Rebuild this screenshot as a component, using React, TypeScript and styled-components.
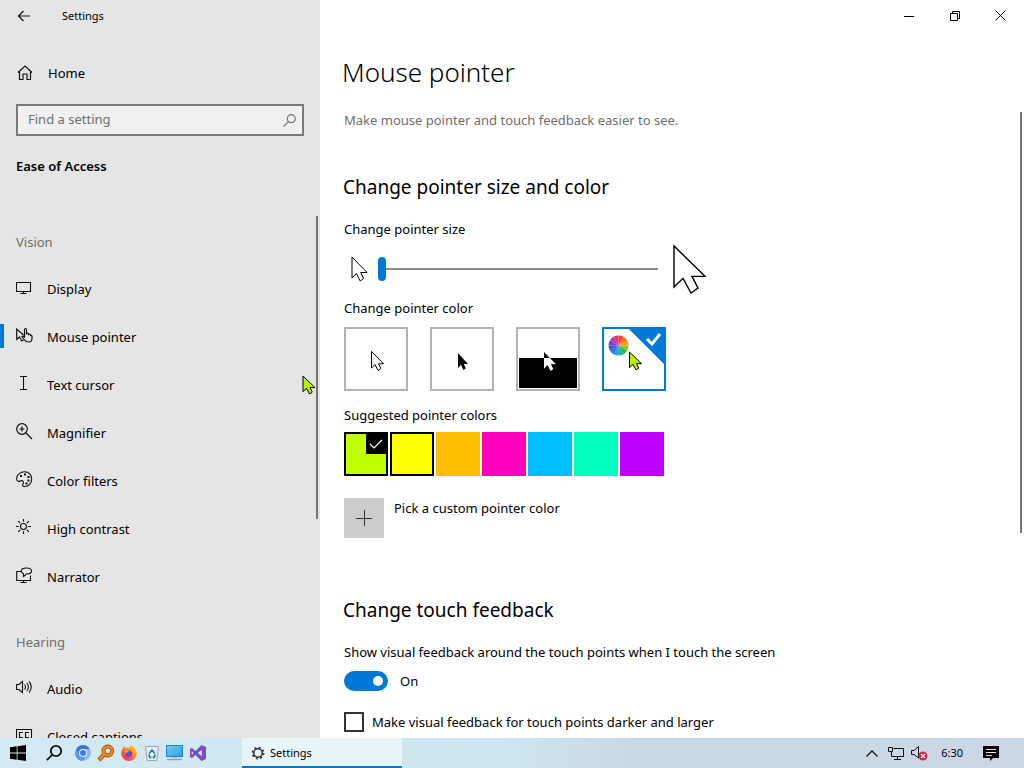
import React from "react";
import styled, { createGlobalStyle } from "styled-components";

const accent = "#0078d7";

const GlobalStyle = createGlobalStyle`
  *, *::before, *::after { box-sizing: border-box; }
  body {
    margin: 0;
    font-family: "Noto Sans", "Open Sans", sans-serif;
    font-size: 13px;
    line-height: 20px;
    color: #000;
    background: #fff;
  }
  button, input { font: inherit; color: inherit; }
  button { border: 0; padding: 0; background: none; }
  h1, h2, p, ul { margin: 0; padding: 0; }
  svg { display: block; flex: none; }
`;

const Desktop = styled.div`
  display: flex;
  flex-direction: column;
  height: 100vh;
  overflow: hidden;
`;

const Window = styled.div`
  display: flex;
  flex: 1;
  min-height: 0;
`;

/* ---------- Sidebar ---------- */

const Sidebar = styled.aside`
  display: flex;
  flex-direction: column;
  width: 320px;
  flex: none;
  background: #e5e5e5;
`;

const TitleRow = styled.div`
  display: flex;
  align-items: center;
  gap: 30px;
  height: 32px;
  padding-left: 16px;
  font-size: 11px;
`;

const IconButton = styled.button`
  display: grid;
  place-items: center;
  width: 16px;
  height: 32px;
`;

const HomeLink = styled.a`
  display: flex;
  align-items: center;
  gap: 15px;
  height: 48px;
  margin-top: 17px;
  padding-left: 17px;
  color: inherit;
  text-decoration: none;
`;

const SearchBox = styled.div`
  display: flex;
  align-items: center;
  height: 32px;
  margin: 7px 16px 0;
  padding: 0 6px 0 10px;
  border: 2px solid #7a7a7a;
  background: #f1f1f1;
  color: #767676;
`;

const SearchInput = styled.input`
  flex: 1;
  min-width: 0;
  padding: 0 0 2px;
  border: 0;
  outline: 0;
  background: transparent;
  &::placeholder { color: #6e6e6e; opacity: 1; }
`;

const SectionName = styled.h2`
  margin: 20px 16px 0;
  font-size: 13px;
  line-height: 20px;
  font-weight: 600;
`;

const NavScroll = styled.div`
  display: flex;
  flex: 1;
  min-height: 0;
  margin-top: 40px;
  overflow: hidden;
`;

const NavLists = styled.nav`
  flex: 1;
`;

const ScrollThumb = styled.div<{ $length: string; $top?: number }>`
  width: 2px;
  height: ${(p) => p.$length};
  margin: ${(p) => p.$top ?? 0}px 2px 0 0;
  background: #767676;
`;

const NavHeading = styled.p`
  padding: 16px 16px 13px;
  color: #6e6e6e;
`;

const NavList = styled.ul`
  list-style: none;
  padding-bottom: 15px;
`;

const NavLink = styled.a<{ $active?: boolean }>`
  display: flex;
  align-items: center;
  gap: 14px;
  height: 48px;
  padding-left: 16px;
  color: inherit;
  text-decoration: none;
  background: linear-gradient(${accent}, ${accent}) no-repeat 0 11px / ${(p) => (p.$active ? "4px 24px" : "0 0")};
  svg { margin-bottom: 4px; }
`;

/* ---------- Main pane ---------- */

const Main = styled.main`
  display: flex;
  flex-direction: column;
  flex: 1;
  min-width: 0;
`;

const WindowControls = styled.div`
  display: flex;
  justify-content: flex-end;
  height: 32px;
`;

const ControlButton = styled.button`
  display: grid;
  place-items: center;
  width: 46px;
  height: 32px;
`;

const PageTitle = styled.h1`
  margin-top: 20px;
  padding-left: 22px;
  font-size: 26px;
  line-height: 40px;
  font-weight: 300;
`;

const PageScroll = styled.div`
  display: flex;
  flex: 1;
  min-height: 0;
  margin-top: 18px;
  overflow: hidden;
`;

const Content = styled.div`
  flex: 1;
  min-width: 0;
  padding-left: 24px;
`;

const Intro = styled.p`
  color: #6e6e6e;
`;

const Heading = styled.h2`
  margin-left: -1px;
  font-size: 19px;
  line-height: 28px;
  font-weight: 400;
`;

const Group = styled.section<{ $top: number }>`
  margin-top: ${(p) => p.$top}px;
`;

const FieldLabel = styled.label<{ $top: number }>`
  display: block;
  margin-top: ${(p) => p.$top}px;
`;

const SizeRow = styled.div`
  display: flex;
  align-items: center;
  height: 50px;
  margin-top: 5px;
  padding-left: 7px;
`;

const Slider = styled.input`
  appearance: none;
  width: 280px;
  height: 24px;
  margin: 0 15px 0 10px;
  background: linear-gradient(#8c8c8c, #8c8c8c) no-repeat center / 100% 2px;
  &::-webkit-slider-thumb {
    appearance: none;
    width: 8px;
    height: 24px;
    border-radius: 4px;
    background: ${accent};
  }
`;

const Fieldset = styled.fieldset<{ $top: number }>`
  min-width: 0;
  margin: ${(p) => p.$top}px 0 0;
  padding: 0;
  border: 0;
  legend { padding: 0; }
`;

const Tiles = styled.div`
  display: flex;
  gap: 22px;
  margin-top: 9px;
`;

const Tile = styled.label`
  display: grid;
  > * { grid-area: 1 / 1; }
  svg { pointer-events: none; }
`;

const TileRadio = styled.input`
  appearance: none;
  width: 64px;
  height: 64px;
  margin: 0;
  border: 2px solid #b3b3b3;
  background: #fff;
  &:checked { border-color: ${accent}; }
`;

const Swatches = styled.div`
  display: flex;
  gap: 2px;
  margin-top: 7px;
`;

const Swatch = styled.input<{ $color: string; $outlined?: boolean }>`
  appearance: none;
  width: 44px;
  height: 44px;
  margin: 0;
  background: ${(p) => p.$color};
  border: ${(p) => (p.$outlined ? "2px solid #000" : "0")};
`;

const CustomColor = styled.button`
  display: flex;
  align-items: flex-start;
  gap: 10px;
  margin-top: 22px;
`;

const PlusBox = styled.span`
  display: grid;
  place-items: center;
  width: 40px;
  height: 40px;
  background: #ccc;
`;

const ToggleRow = styled.div`
  display: flex;
  align-items: center;
  gap: 12px;
  margin-top: 9px;
`;

const Toggle = styled.input`
  appearance: none;
  display: flex;
  align-items: center;
  justify-content: flex-end;
  width: 44px;
  height: 20px;
  margin: 0;
  padding: 0 5px;
  border-radius: 10px;
  background: ${accent};
  &::after {
    content: "";
    width: 10px;
    height: 10px;
    border-radius: 50%;
    background: #fff;
  }
`;

const CheckRow = styled.label`
  display: flex;
  align-items: center;
  gap: 8px;
  margin-top: 21px;
`;

const CheckBox = styled.input`
  appearance: none;
  width: 20px;
  height: 20px;
  margin: 0;
  border: 2px solid #333;
  background: #fff;
`;

/* ---------- Taskbar ---------- */

const Taskbar = styled.footer`
  display: flex;
  align-items: stretch;
  justify-content: space-between;
  height: 30px;
  flex: none;
  font-size: 11px;
  background: linear-gradient(90deg, #d3eaf3 0%, #cde5ed 50%, #c9d8e6 62%, #cbd7e5 100%);
`;

const Launchers = styled.div`
  display: flex;
  align-items: center;
`;

const Launcher = styled.button<{ $width: number }>`
  display: grid;
  place-items: center;
  width: ${(p) => p.$width}px;
  height: 30px;
`;

const TaskButton = styled.button`
  display: flex;
  align-items: center;
  gap: 5px;
  width: 160px;
  height: 30px;
  margin-left: 32px;
  padding-left: 9px;
  padding-top: 2px;
  border-bottom: 2px solid ${accent};
  background: #e8f4f7;
`;

const Tray = styled.div`
  display: flex;
  align-items: center;
  padding-right: 25px;
`;

const Clock = styled.time`
  margin: 0 20px 0 9px;
`;

const FloatingPointer = styled.div`
  position: absolute;
  left: 302px;
  top: 374px;
  pointer-events: none;
`;

/* ---------- Drawings ---------- */

const ARROW = "M0 0V42L9 33L17 48L24 43L18 31H31Z";
const pointerLime = "#b8ee08";

type ArrowProps = { width: number; height: number; fill?: string; stroke?: string; line?: number };

const ArrowShape = ({ x = 0, y = 0, w, h, fill = "#fff", stroke = "#000", line = 1 }: {
  x?: number; y?: number; w: number; h: number; fill?: string; stroke?: string; line?: number;
}) => (
  <path
    d={ARROW}
    transform={`translate(${x} ${y}) scale(${w / 31} ${h / 48})`}
    fill={fill}
    stroke={stroke}
    strokeWidth={line}
    vectorEffect="non-scaling-stroke"
  />
);

const Arrow = ({ width, height, ...rest }: ArrowProps) => (
  <svg width={width + 2} height={height + 4} viewBox={`-1 -2 ${width + 2} ${height + 4}`}>
    <ArrowShape w={width} h={height} {...rest} />
  </svg>
);

const Glyph = ({ children, size = 17, line = 1.1 }: { children: React.ReactNode; size?: number; line?: number }) => (
  <svg width={size} height={size} viewBox={`0 0 ${size} ${size}`} fill="none" stroke="#111" strokeWidth={line} aria-hidden="true">
    {children}
  </svg>
);

const wheelColors = ["#f5402c", "#ff7414", "#f2a012", "#9cc022", "#3cb43c", "#1fb488", "#18a4e0", "#2c74ea", "#4c50e0", "#7a40d0", "#bc3aae", "#ea2f70"];

const Wheel = ({ cx, cy, r }: { cx: number; cy: number; r: number }) => (
  <g>
    {wheelColors.map((color, i) => {
      const at = (k: number) => {
        const a = (k / 12) * Math.PI * 2 - Math.PI / 2;
        return `${cx + r * Math.cos(a)} ${cy + r * Math.sin(a)}`;
      };
      return <path key={color} d={`M${cx} ${cy}L${at(i)}A${r} ${r} 0 0 1 ${at(i + 1)}Z`} fill={color} />;
    })}
  </g>
);

const pointerStyles = [
  { name: "White", art: <ArrowShape x={27.5} y={24.5} w={12} h={19} /> },
  { name: "Black", art: <ArrowShape x={28} y={26} w={10} h={17} fill="#000" stroke="none" /> },
  {
    name: "Inverted",
    art: (
      <>
        <clipPath id="upper"><rect width="64" height="31" /></clipPath>
        <clipPath id="lower"><rect y="31" width="64" height="33" /></clipPath>
        <rect x="3" y="31" width="58" height="30" fill="#000" />
        <g clipPath="url(#upper)"><ArrowShape x={28} y={25} w={12} h={19} fill="#000" stroke="none" /></g>
        <g clipPath="url(#lower)"><ArrowShape x={28} y={25} w={12} h={19} fill="#fff" stroke="none" /></g>
      </>
    ),
  },
  {
    name: "Custom",
    art: (
      <>
        <path d="M26 1H63V38Z" fill={accent} />
        <path d="M45 12L50 17L58 7" fill="none" stroke="#fff" strokeWidth="3" />
        <Wheel cx={16.5} cy={18.5} r={10} />
        <ArrowShape x={27.5} y={25} w={12} h={18} fill={pointerLime} />
      </>
    ),
  },
];

const swatches = [
  { name: "Lime", color: "#bfff00", outlined: true },
  { name: "Yellow", color: "#ffff00", outlined: true },
  { name: "Gold", color: "#ffbf00" },
  { name: "Pink", color: "#ff00bf" },
  { name: "Sky", color: "#00bfff" },
  { name: "Turquoise", color: "#00ffbf" },
  { name: "Purple", color: "#bf00ff" },
];

const vision = [
  { name: "Display", icon: <Glyph><path d="M.5 3.5H14.5V12.5H.5ZM7.5 12.5V14.5M4.5 14.5H10.5" /></Glyph> },
  {
    name: "Mouse pointer",
    icon: (
      <Glyph line={1.2}>
        <path d="M7.5 8L.7 2V12.5L3.5 10L5.8 14L7.5 13" />
        <path d="M8.5 10V3Q8.5 1.5 9.5 1.5Q10.5 1.5 10.5 3V7.5V6.5Q12.5 5.5 12.5 7.5Q14.5 6.5 14.5 8.5Q16 8 16 9.5V11.5Q16 15 12.5 15Q10 15 8.5 13L6 9.8Q6.5 8.2 8.5 10Z" />
      </Glyph>
    ),
  },
  { name: "Text cursor", icon: <Glyph><path d="M4 1.5H11M7.5 1.5V14.5M4 14.5H11" /></Glyph> },
  { name: "Magnifier", icon: <Glyph line={1.2}><circle cx="6" cy="6" r="5.3" /><path d="M10 10L16 16M3.5 6H8.5M6 3.5V8.5" /></Glyph> },
  {
    name: "Color filters",
    icon: (
      <Glyph>
        <path d="M.6 7.5C1 3.5 4.5.7 8.5.7C13 .7 15.7 4 15.7 8C15.7 12.5 12.5 15.5 9 15.5C7 15.5 6 14.5 7 12.8C8 11 6.8 9 5 9.8C3 10.8.4 10.5.6 7.5Z" />
        <path d="M4 5H6M8 3.5H10M11.5 6H13.5M11.5 9.5H13.5M9.5 12.5H11.5" strokeWidth="2" />
      </Glyph>
    ),
  },
  {
    name: "High contrast",
    icon: (
      <Glyph>
        <circle cx="7.5" cy="7.5" r="3" />
        <path d="M7.5 0V2.8M7.5 12.2V15M0 7.5H2.8M12.2 7.5H15M2.2 2.2L4.2 4.2M10.8 10.8L12.8 12.8M12.8 2.2L10.8 4.2M4.2 10.8L2.2 12.8" />
      </Glyph>
    ),
  },
  {
    name: "Narrator",
    icon: (
      <Glyph>
        <path d="M5 4.5H.7V13.5H14.5V8.5M7.5 13.5V15.5M4.5 15.5H10.5" />
        <path d="M7.5 9.5V6.8Q5.2 5.5 5.2 4Q5.5 1 10.5 1Q15.6 1 15.6 4Q15.6 7 10.5 7Z" />
      </Glyph>
    ),
  },
];

const hearing = [
  { name: "Audio", icon: <Glyph><path d="M.6 5.5H3L6.5 2.5V13.5L3 10.5H.6ZM8.5 5.5Q10.5 8 8.5 10.5M10.8 4Q14 8 10.8 12M13 2.3Q17.5 8 13 13.7" /></Glyph> },
  { name: "Closed captions", icon: <Glyph><path d="M.5 2.5H15.5V13.5H.5ZM7 5.5H3.5V10.5H7M13 5.5H9.5V10.5H13" /></Glyph> },
];

const taskIcons = [
  {
    name: "Start", width: 36,
    art: <svg width="16" height="16" viewBox="0 0 16 16"><path d="M0 2.3L6.7 1.3V7.6H0ZM7.5 1.2L16 0V7.6H7.5ZM0 8.4H6.7V14.7L0 13.7ZM7.5 8.4H16V16L7.5 14.8Z" /></svg>,
  },
  {
    name: "Search", width: 36,
    art: <svg width="18" height="18" viewBox="0 0 18 18" fill="none" stroke="#111" strokeWidth="1.8"><circle cx="11" cy="7" r="5.2" /><path d="M7.2 10.8L1.8 16.2" /></svg>,
  },
  {
    name: "Chromium", width: 22,
    art: (
      <svg width="16" height="16" viewBox="0 0 16 16">
        <circle cx="8" cy="8" r="7.8" fill="#8db7f5" />
        <path d="M1.2 4A7.8 7.8 0 0 1 14.8 4H8A4 4 0 0 0 4.5 10Z" fill="#3d73dc" />
        <path d="M1.2 4A7.8 7.8 0 0 0 8 15.8L11.5 10A4 4 0 0 1 4.5 10Z" fill="#5b93ee" />
        <circle cx="8" cy="8" r="4" fill="#e8f1ff" /><circle cx="8" cy="8" r="3" fill="#3f7be6" />
      </svg>
    ),
  },
  {
    name: "Everything", width: 23,
    art: (
      <svg width="18" height="18" viewBox="0 0 18 18" fill="none">
        <circle cx="10.8" cy="7" r="4.4" stroke="#a34c08" strokeWidth="4" /><path d="M7 10.5L2 16" stroke="#a34c08" strokeWidth="4.2" />
        <circle cx="10.8" cy="7" r="4.4" stroke="#f58a1c" strokeWidth="2.4" /><path d="M7.4 10L2.6 15.4" stroke="#f58a1c" strokeWidth="2.6" />
      </svg>
    ),
  },
  {
    name: "Firefox", width: 23,
    art: (
      <svg width="16" height="16" viewBox="0 0 16 16">
        <defs><linearGradient id="fox" x1="1" y1="0" x2=".2" y2="1"><stop stopColor="#ffe03a" /><stop offset=".45" stopColor="#ff8a24" /><stop offset="1" stopColor="#f0286a" /></linearGradient></defs>
        <path d="M2 3L3 1L5 3Q7 2.5 8 3L10 0Q15.8 3 15.8 8.5A7.8 7.5 0 0 1 .2 8.5Q.2 5 2 3Z" fill="url(#fox)" />
        <circle cx="7.8" cy="8.8" r="3.4" fill="#7a3fd0" /><path d="M3 6Q6 4 8 6.3L5.5 8Q4 8 3 6Z" fill="#ff9c2a" />
      </svg>
    ),
  },
  {
    name: "Recycle Bin", width: 23,
    art: (
      <svg width="16" height="16" viewBox="0 0 16 16">
        <path d="M1.5 1.5H14.5L12.8 15.5H3.2Z" fill="#e6ecef" stroke="#9aa5ab" />
        <path d="M5.2 8.5L8 5L10.8 8.5M11.3 9.5L10 12.3H8.7M4.7 9.5L6 12.3H7.3" fill="none" stroke="#2378b4" strokeWidth="1.7" />
      </svg>
    ),
  },
  {
    name: "This PC", width: 23,
    art: (
      <svg width="17" height="16" viewBox="0 0 17 16">
        <defs><linearGradient id="screen" x2="1" y2="1"><stop stopColor="#6fd2f6" /><stop offset="1" stopColor="#2b9bdc" /></linearGradient></defs>
        <rect x=".5" y=".5" width="16" height="11" fill="url(#screen)" stroke="#2a7fb0" /><path d="M1 14.5H16" stroke="#8aa3b0" strokeWidth="1.5" /><path d="M6 12.5H11" stroke="#a8bcc7" />
      </svg>
    ),
  },
  {
    name: "Visual Studio", width: 24,
    art: (
      <svg width="16" height="16" viewBox="0 0 16 16" fillRule="evenodd">
        <path d="M11.5 0L16 2V14L11.5 16L5.5 10L2 13L0 12V4L2 3L5.5 6ZM11.8 4.8L7.8 8L11.8 11.2ZM1.7 6V10L3.6 8Z" fill="#7a4cc0" />
      </svg>
    ),
  },
];

const NavGroup = ({ title, items }: { title: string; items: typeof vision }) => (
  <>
    <NavHeading>{title}</NavHeading>
    <NavList>
      {items.map((item) => (
        <li key={item.name}>
          <NavLink href="#" $active={item.name === "Mouse pointer"}>{item.icon}<span>{item.name}</span></NavLink>
        </li>
      ))}
    </NavList>
  </>
);

export default function App() {
  return (
    <Desktop>
      <GlobalStyle />
      <Window>
        <Sidebar>
          <TitleRow>
            <IconButton aria-label="Back"><Glyph size={14} line={1.2}><path d="M13 7H1.5M6.5 2L1.5 7L6.5 12" /></Glyph></IconButton>
            <span>Settings</span>
          </TitleRow>
          <HomeLink href="#">
            <Glyph size={16} line={1.2}><path d="M1 7.5L8 1L15 7.5M2.5 6.5V14.5H6V9H10V14.5H13.5V6.5" /></Glyph>
            <span>Home</span>
          </HomeLink>
          <SearchBox>
            <SearchInput type="text" placeholder="Find a setting" aria-label="Find a setting" />
            <svg width="13" height="13" viewBox="0 0 13 13" fill="none" stroke="#767676" strokeWidth="1.2"><circle cx="8.3" cy="4.7" r="4" /><path d="M5.4 7.6L.5 12.5" /></svg>
          </SearchBox>
          <SectionName>Ease of Access</SectionName>
          <NavScroll>
            <NavLists>
              <NavGroup title="Vision" items={vision} />
              <NavGroup title="Hearing" items={hearing} />
            </NavLists>
            <ScrollThumb $length="58%" />
          </NavScroll>
        </Sidebar>

        <Main>
          <WindowControls>
            <ControlButton aria-label="Minimize"><svg width="10" height="10" stroke="#000"><path d="M0 5.5H10" /></svg></ControlButton>
            <ControlButton aria-label="Restore"><svg width="10" height="10" stroke="#000" fill="none"><path d="M.5 2.5H7.5V9.5H.5ZM2.5 2.5V.5H9.5V7.5H7.5" /></svg></ControlButton>
            <ControlButton aria-label="Close"><svg width="12" height="12" stroke="#000"><path d="M.5.5L10.5 10.5M10.5.5L.5 10.5" /></svg></ControlButton>
          </WindowControls>
          <PageTitle>Mouse pointer</PageTitle>
          <PageScroll>
            <Content>
              <Intro>Make mouse pointer and touch feedback easier to see.</Intro>

              <Group $top={43}>
                <Heading>Change pointer size and color</Heading>
                <FieldLabel $top={18} htmlFor="size">Change pointer size</FieldLabel>
                <SizeRow>
                  <Arrow width={15} height={24} />
                  <Slider id="size" type="range" min={0} max={14} defaultValue={0} />
                  <Arrow width={31} height={47} line={1.4} />
                </SizeRow>

                <Fieldset $top={4}>
                  <legend>Change pointer color</legend>
                  <Tiles>
                    {pointerStyles.map((style) => (
                      <Tile key={style.name}>
                        <TileRadio type="radio" name="style" aria-label={style.name} defaultChecked={style.name === "Custom"} />
                        <svg width="64" height="64" viewBox="0 0 64 64">{style.art}</svg>
                      </Tile>
                    ))}
                  </Tiles>
                </Fieldset>

                <Fieldset $top={14}>
                  <legend>Suggested pointer colors</legend>
                  <Swatches>
                    {swatches.map((s) => (
                      <Tile key={s.name}>
                        <Swatch type="radio" name="color" aria-label={s.name} $color={s.color} $outlined={s.outlined} defaultChecked={s.name === "Lime"} />
                        {s.name === "Lime" && (
                          <svg width="44" height="44" viewBox="0 0 44 44"><path d="M22 0H44V22H22Z" /><path d="M26 12L30 16L38 8" fill="none" stroke="#fff" strokeWidth="1.2" /></svg>
                        )}
                      </Tile>
                    ))}
                  </Swatches>
                </Fieldset>

                <CustomColor>
                  <PlusBox><svg width="16" height="16" stroke="#333"><path d="M0 8.5H16M8.5 0V16" /></svg></PlusBox>
                  <span>Pick a custom pointer color</span>
                </CustomColor>
              </Group>

              <Group $top={58}>
                <Heading>Change touch feedback</Heading>
                <FieldLabel $top={18} htmlFor="touch">Show visual feedback around the touch points when I touch the screen</FieldLabel>
                <ToggleRow>
                  <Toggle id="touch" type="checkbox" role="switch" defaultChecked />
                  <span>On</span>
                </ToggleRow>
                <CheckRow>
                  <CheckBox type="checkbox" />
                  <span>Make visual feedback for touch points darker and larger</span>
                </CheckRow>
              </Group>
            </Content>
            <ScrollThumb $length="67%" $top={2} />
          </PageScroll>
        </Main>
      </Window>

      <Taskbar>
        <Launchers>
          {taskIcons.map((t) => (
            <Launcher key={t.name} $width={t.width} aria-label={t.name}>{t.art}</Launcher>
          ))}
          <TaskButton>
            <svg width="14" height="14" viewBox="0 0 14 14" fill="none" stroke="#333"><circle cx="7" cy="7" r="4.2" strokeWidth="1.5" /><circle cx="7" cy="7" r="5.6" strokeWidth="1.6" strokeDasharray="2 2.398" /></svg>
            <span>Settings</span>
          </TaskButton>
        </Launchers>
        <Tray>
          <Launcher $width={24} aria-label="Show hidden icons"><svg width="12" height="7" fill="none" stroke="#111" strokeWidth="1.3"><path d="M.5 6.5L6 1L11.5 6.5" /></svg></Launcher>
          <Launcher $width={24} aria-label="Network"><svg width="16" height="15" fill="none" stroke="#111"><path d="M5.5 2.5H15.5V10.5H3.5V6M.5 1.5H4.5V5.5H.5ZM9.5 10.5V13.5M6 13.5H13" /></svg></Launcher>
          <Launcher $width={24} aria-label="Volume muted">
            <svg width="18" height="16" fill="none" stroke="#111"><path d="M.5 5.5H3L7.5 1.5V13L3 9.5H.5Z" /><circle cx="12" cy="11" r="4.5" fill="#d7263d" stroke="none" /><path d="M10 9L14 13M14 9L10 13" stroke="#fff" strokeWidth="1.2" /></svg>
          </Launcher>
          <Clock>6:30</Clock>
          <button aria-label="Notifications"><svg width="16" height="17"><path d="M0 1H16V13H10L7 16V13H0Z" /><path d="M3 4.5H13M3 7.5H13M3 10.5H9" stroke="#dfe8f0" /></svg></button>
        </Tray>
      </Taskbar>

      <FloatingPointer><Arrow width={12} height={18} fill={pointerLime} /></FloatingPointer>
    </Desktop>
  );
}
